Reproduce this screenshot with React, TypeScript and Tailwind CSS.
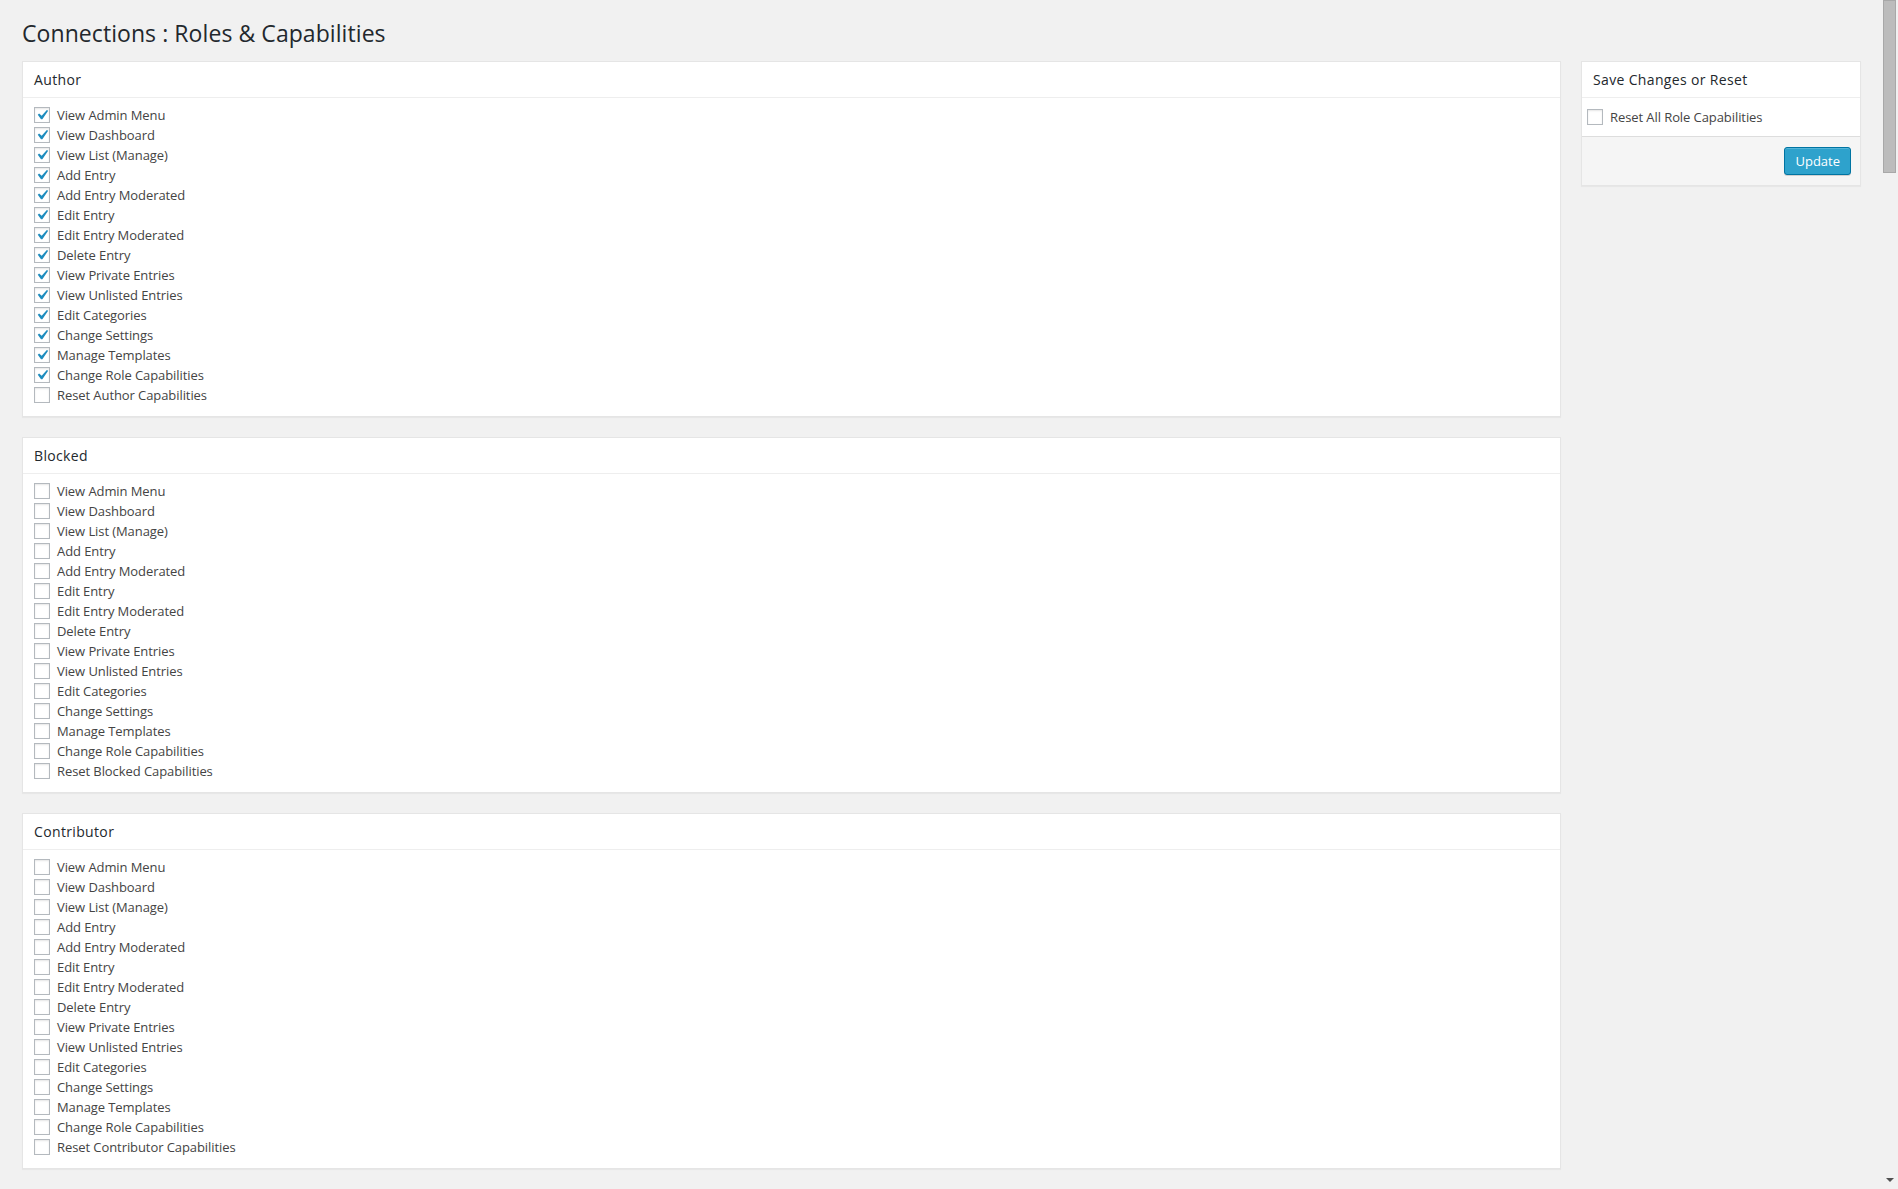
import React from "react";

const capabilities = [
  "View Admin Menu",
  "View Dashboard",
  "View List (Manage)",
  "Add Entry",
  "Add Entry Moderated",
  "Edit Entry",
  "Edit Entry Moderated",
  "Delete Entry",
  "View Private Entries",
  "View Unlisted Entries",
  "Edit Categories",
  "Change Settings",
  "Manage Templates",
  "Change Role Capabilities",
];

const roles = [
  { name: "Author", checked: true },
  { name: "Blocked", checked: false },
  { name: "Contributor", checked: false },
];

function Checkbox({ checked }: { checked: boolean }) {
  return (
    <span className="inline-flex h-4 w-4 shrink-0 items-center justify-center border border-[#b4b9be] bg-white shadow-[inset_0_1px_2px_rgba(0,0,0,0.1)]">
      {checked && (
        <svg viewBox="2 2 16 16" className="-m-px h-4 w-4 shrink-0" fill="#1e8cbe">
          <path d="M14.83 4.89l1.34.94-5.81 8.38H9.02L5.78 9.67l1.34-1.25 2.57 2.4z" />
        </svg>
      )}
    </span>
  );
}

function CapRow({ label, checked }: { label: string; checked: boolean }) {
  return (
    <label className="flex h-5 items-center text-[13px] leading-5 tracking-[-0.08px] text-[#444]">
      <Checkbox checked={checked} />
      <span className="ml-[7px]">{label}</span>
    </label>
  );
}

function RolePanel({ name, checked }: { name: string; checked: boolean }) {
  return (
    <div className="mb-5 border border-[#e5e5e5] bg-white shadow-[0_1px_1px_rgba(0,0,0,0.04)]">
      <h3 className="border-b border-[#eee] px-[11px] py-2 text-[14px] leading-[19px] tracking-[0.35px] text-[#23282d]">
        {name}
      </h3>
      <div className="px-[11px] pt-[7px] pb-[11px]">
        {capabilities.map((c) => (
          <CapRow key={c} label={c} checked={checked} />
        ))}
        <CapRow label={`Reset ${name} Capabilities`} checked={false} />
      </div>
    </div>
  );
}

export default function App() {
  return (
    <div className="flex h-[1189px] overflow-hidden bg-[#f1f1f1] font-['Open_Sans',sans-serif]">
      <div className="min-w-0 flex-1 pl-[22px] pr-5">
        <h1 className="pt-[19px] mb-[13px] text-[23px] leading-[29px] font-normal tracking-[0.07px] text-[#23282d]">
          Connections : Roles &amp; Capabilities
        </h1>
        <div className="flex items-start gap-5">
          <div className="min-w-0 flex-1">
            {roles.map((r) => (
              <RolePanel key={r.name} name={r.name} checked={r.checked} />
            ))}
          </div>
          <div className="w-[280px] shrink-0 border border-[#e5e5e5] bg-white shadow-[0_1px_1px_rgba(0,0,0,0.04)]">
            <h3 className="border-b border-[#eee] px-[11px] py-2 text-[14px] leading-[19px] tracking-[0.35px] text-[#23282d]">
              Save Changes or Reset
            </h3>
            <div className="border-b border-[#ddd] px-[5px] py-[9px]">
              <CapRow label="Reset All Role Capabilities" checked={false} />
            </div>
            <div className="flex justify-end bg-[#f5f5f5] py-[10px] pr-[9px]">
              <button className="h-7 rounded-[3px] border border-[#0074a2] bg-[#2ea2cc] px-[10px] pb-px text-[13px] leading-[26px] text-white shadow-[inset_0_1px_0_rgba(120,200,230,0.5),0_1px_0_rgba(0,0,0,0.15)]">
                Update
              </button>
            </div>
          </div>
        </div>
      </div>
      <div className="flex w-[17px] shrink-0 flex-col bg-[#f1f1f1]">
        <div className="ml-[2px] h-[173px] w-[13px] border border-[#a8a8a8] bg-[#bcbcbc]" />
        <div className="flex-1" />
        <div className="mb-[7px] flex justify-center">
          <svg width="8" height="4" viewBox="0 0 8 4">
            <path d="M0 0h8L4 4z" fill="#505050" />
          </svg>
        </div>
      </div>
    </div>
  );
}
